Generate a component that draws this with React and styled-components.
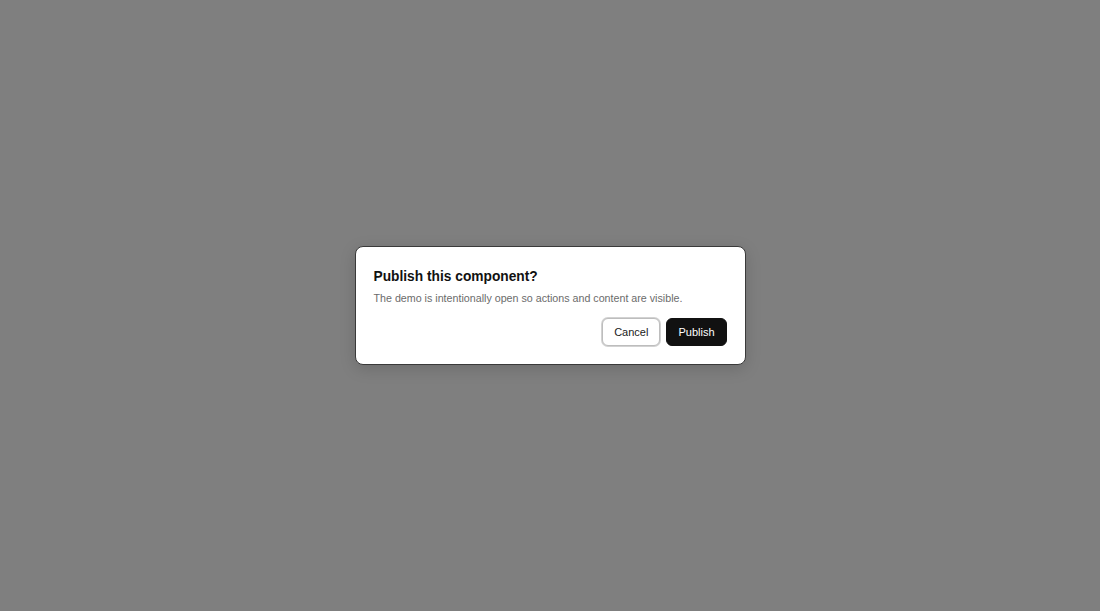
import React from 'react';
import styled, { createGlobalStyle } from 'styled-components';

const GlobalStyle = createGlobalStyle`
  html, body {
    margin: 0;
    padding: 0;
    height: 100%;
  }
  body {
    font-family: 'Liberation Sans', Arial, sans-serif;
    background: #ffffff;
  }
  #root {
    height: 100%;
  }
`;

const Backdrop = styled.div`
  height: 100vh;
  display: flex;
  align-items: center;
  justify-content: center;
  background: rgba(0, 0, 0, 0.5);
`;

const Dialog = styled.div`
  width: 391px;
  box-sizing: border-box;
  padding: 18px;
  background: #ffffff;
  border: 1px solid #3a3a3a;
  border-radius: 8px;
  box-shadow: 0 4px 16px rgba(0, 0, 0, 0.15);
`;

const Title = styled.h2`
  margin: 0;
  padding-top: 1px;
  font-size: 13.75px;
  line-height: 21px;
  font-weight: 700;
  color: #111111;
`;

const Description = styled.p`
  margin: 3px 0 0;
  font-size: 10.7px;
  line-height: 16px;
  color: #6b6b6b;
`;

const Actions = styled.div`
  margin-top: 12px;
  display: flex;
  justify-content: flex-end;
  gap: 6px;
`;

const Button = styled.button`
  height: 28px;
  box-sizing: border-box;
  padding: 0 11px;
  border-radius: 6px;
  font-family: inherit;
  font-size: 11px;
  cursor: pointer;
  border: 1px solid ${({ primary }) => (primary ? '#111111' : '#bdbdbd')};
  background: ${({ primary }) => (primary ? '#111111' : '#ffffff')};
  color: ${({ primary }) => (primary ? '#ffffff' : '#1a1a1a')};
  box-shadow: ${({ primary }) => (primary ? 'none' : '0 0 0 1px #d2d2d2')};
`;

const App = () => (
  <>
    <GlobalStyle />
    <Backdrop>
      <Dialog role="dialog" aria-modal="true">
        <Title>Publish this component?</Title>
        <Description>The demo is intentionally open so actions and content are visible.</Description>
        <Actions>
          <Button>Cancel</Button>
          <Button primary>Publish</Button>
        </Actions>
      </Dialog>
    </Backdrop>
  </>
);

export default App;
